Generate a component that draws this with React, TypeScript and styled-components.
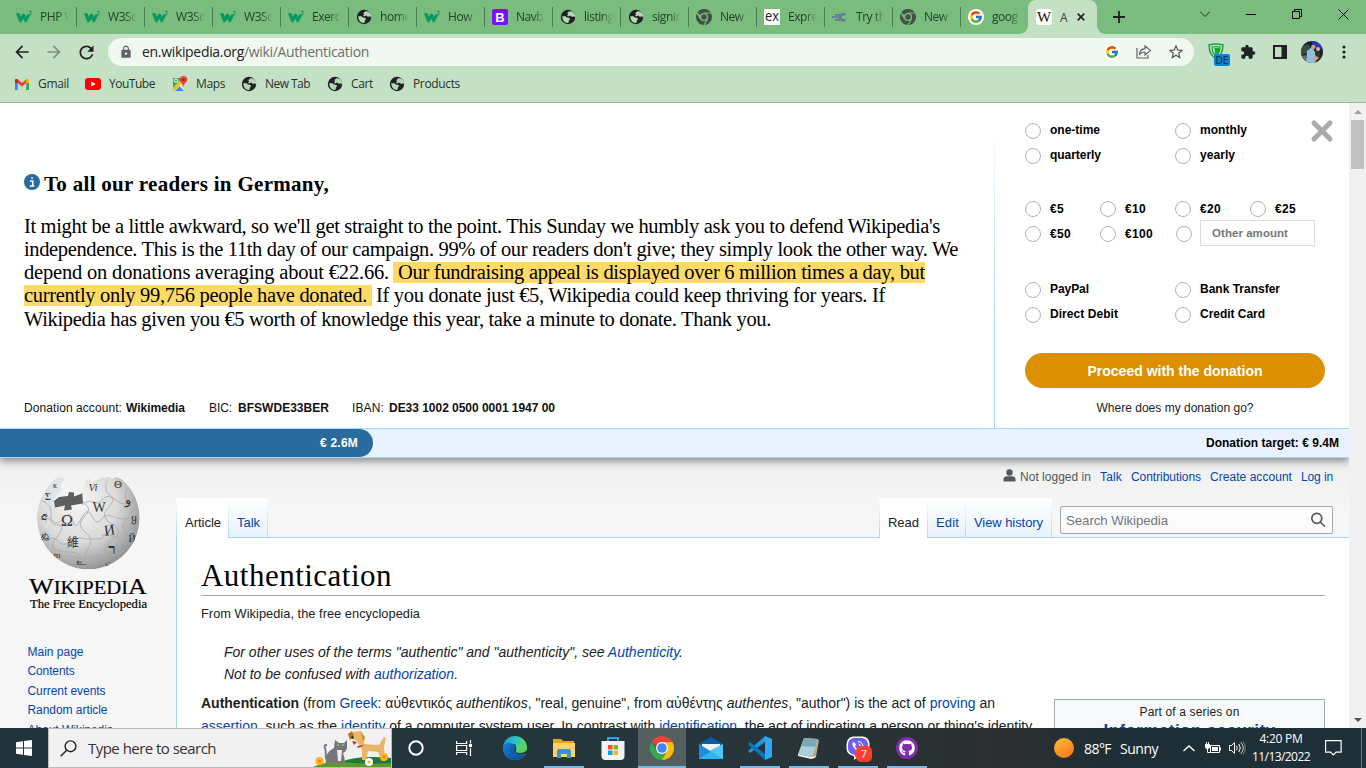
import React, { useLayoutEffect, useRef, useState } from 'react';
import styled, { createGlobalStyle } from 'styled-components';
import { FcGoogle } from 'react-icons/fc';
import { MdExtension, MdStarBorder, MdLock, MdArrowBack, MdArrowForward, MdRefresh } from 'react-icons/md';
import { FaGithub, FaViber } from 'react-icons/fa';

const ui = '"Open Sans", "Noto Sans", sans-serif';
const sans = '"Liberation Sans", Arial, sans-serif';
const serif = '"Liberation Serif", Georgia, serif';

const GlobalStyle = createGlobalStyle`
  * { box-sizing: border-box; }
  body { margin: 0; overflow: hidden; font-family: ${sans}; color: #202122; background: #fff; }
`;

/* Text whose tracking is adjusted so that it fills the given measure. */
const FitText = styled.span`
  display: inline-block;
  white-space: pre;
  flex: none;
`;
function Fit({ w, children }: { w: number; children: React.ReactNode }) {
  const ref = useRef<HTMLSpanElement>(null);
  const [tracking, setTracking] = useState(0);
  useLayoutEffect(() => {
    const el = ref.current;
    if (!el) return;
    const count = (el.textContent || '').length || 1;
    setTracking((w - el.getBoundingClientRect().width) / count);
  }, [w]);
  return <FitText ref={ref} style={{ letterSpacing: tracking }}>{children}</FitText>;
}

const Screen = styled.div`
  width: 1366px; height: 768px; display: flex; flex-direction: column; overflow: hidden;
`;

/* ---------- Browser frame ---------- */
const TabStrip = styled.div`
  height: 34px; flex: none; display: flex; background: #7abc7d; padding-left: 8px; font-family: ${ui}; font-size: 12px;
`;
const TabItem = styled.div`
  width: 68px; height: 34px; display: flex; align-items: center; gap: 8px; flex: none;
  border-left: 1px solid transparent; padding-left: 7px;
  background: linear-gradient(#4c7f50, #4c7f50) left 0 top 7px / 1px 20px no-repeat border-box;
  &:first-child { background: none; }
`;
const TabTitle = styled.span`
  width: 29px; overflow: hidden; white-space: nowrap; color: #24402a; line-height: 18px; font-size: 12px; letter-spacing: -.45px;
  mask-image: linear-gradient(90deg, #000 60%, transparent 100%);
`;
const ActiveTab = styled.div`
  position: relative; width: 69px; height: 34px; background: #c5e1c5; border-radius: 8px 8px 0 0; display: flex;
  align-items: center; padding-left: 8px; color: #3c4043; flex: none;
  &::before, &::after {
    content: ''; position: absolute; bottom: 0; width: 8px; height: 8px;
  }
  &::before { left: -8px; background: radial-gradient(circle at 0 0, transparent 7.5px, #c5e1c5 8px); }
  &::after { right: -8px; background: radial-gradient(circle at 100% 0, transparent 7.5px, #c5e1c5 8px); }
`;
const WikiFavicon = styled.span`
  width: 16px; height: 16px; border-radius: 3px; background: #fff; color: #111; font: 15px/16px ${serif};
  display: flex; justify-content: center; margin-right: 8px;
`;
const ActiveTitle = styled.span` width: 17px; `;
const WindowButtons = styled.div`
  display: flex; margin-left: auto; height: 28px; align-items: center;
`;
const WindowButton = styled.div<{ $w: number }>`
  width: ${p => p.$w}px; display: flex; justify-content: center;
`;
const NewTab = styled.div` width: 44px; height: 34px; display: grid; place-items: center; `;

const Toolbar = styled.div`
  height: 35px; flex: none; background: #c5e1c5; display: flex; align-items: center; padding: 1px 0 0 12px; color: #202124;
  font-family: ${ui};
`;
const NavIcon = styled.div<{ $dim?: boolean }>`
  width: 32px; height: 20px; opacity: ${p => (p.$dim ? 0.42 : 1)}; display: flex; align-items: center;
`;
const AddressBar = styled.div`
  width: 1086px; height: 28px; border-radius: 14px; background: #f1f8f1; display: flex; align-items: center;
  padding: 0 2px 0 11px; font-size: 14px; color: #202124; flex: none;
  > svg { flex: none; }
`;
const UrlText = styled.div` margin-left: 9px; flex: 1; line-height: 20px; `;
const Path = styled.span` color: #6a716b; `;
const AddressIcon = styled.div` width: 32px; display: flex; justify-content: center; `;
const GoogleBadge = styled.div`
  width: 16px; height: 16px; border-radius: 8px; background: #fff; display: grid; place-items: center; flex: none;
`;
const Extensions = styled.div` display: flex; align-items: center; flex: 1; padding-left: 14px; height: 28px; `;
const Blocker = styled.div` position: relative; width: 32px; height: 20px; `;
const CountryBadge = styled.span`
  position: absolute; left: 6px; top: 12px; width: 16px; height: 12px; border-radius: 2px; background: #0a84d0;
  color: #10243a; font-size: 10px; line-height: 12px; text-align: center;
`;
const ExtIcon = styled.div<{ $w: number }>` width: ${p => p.$w}px; display: flex; align-items: center; `;

const Bookmarks = styled.div`
  height: 34px; flex: none; background: #c5e1c5; border-bottom: 1px solid #9fb8a0; display: flex; padding: 0 0 4px 14px;
  align-items: center; font: 12px ${ui}; color: #24332a;
`;
const Bookmark = styled.div<{ $w: number }>`
  width: ${p => p.$w}px; display: flex; align-items: center; gap: 8px; flex: none;
  > svg { flex: none; }
`;

/* ---------- Page viewport ---------- */
const Viewport = styled.div` height: 625px; flex: none; display: flex; `;
const Page = styled.div` width: 1349px; height: 625px; overflow: hidden; background: #f6f6f6; flex: none; `;
const ScrollTrack = styled.div`
  width: 17px; background: #f1f1f1; display: flex; flex-direction: column; align-items: center; padding: 7px 0 6px;
`;
const ScrollThumb = styled.div` width: 13px; height: 49px; margin-top: 6px; background: #c1c1c1; `;
const ArrowUp = styled.div` border: 4px solid transparent; border-top: 0; border-bottom: 4px solid #a0a0a0; `;
const ArrowDown = styled.div` margin-top: auto; border: 4px solid transparent; border-bottom: 0; border-top: 4px solid #505050; `;

const Banner = styled.section`
  position: relative; z-index: 1; height: 355px; background: #fff; box-shadow: 0 3px 8px rgba(0, 0, 0, .45);
`;
const BannerMain = styled.div` display: flex; height: 325px; `;
const Message = styled.div` width: 994px; padding: 69px 0 0 24px; color: #000; `;
const Greeting = styled.div`
  display: flex; gap: 4px; font: bold 21px/24px ${serif}; height: 24px; align-items: center;
  > svg { margin-top: -4px; flex: none; }
`;
const Appeal = styled.div` margin-top: 17.600px; font: 20.5px/23.25px ${serif}; height: 117.400px; `;
const AppealLine = styled.div` display: flex; height: 23.25px; align-items: center; padding-top: 2px; `;
const Highlight = styled.span<{ $gap?: number; $after?: number }>`
  background: #ffdb66; height: 21px; line-height: 21px; margin-top: -1px; padding-left: ${p => (p.$gap ? 5 : 0)}px; margin-left: ${p => p.$gap || 0}px;
  padding-right: ${p => (p.$after ? 5 : 0)}px; margin-right: ${p => p.$after || 0}px;
`;
const BankLine = styled.div`
  display: flex; margin-top: 68px; font-size: 12px; line-height: 18px; color: #111;
`;
const BankItem = styled.div<{ $w: number; $label: number }>`
  width: ${p => p.$w}px; display: grid; grid-template-columns: ${p => p.$label}px auto; flex: none; justify-content: start;
  justify-items: start;
`;
const VerticalRule = styled.div` width: 1px; background: linear-gradient(#fff 5%, #a7d7f9 70%); `;
const DonationForm = styled.div` flex: 1; padding: 15px 0 0 30px; color: #000; position: relative; font-size: 12px; `;
const OptionGrid = styled.div<{ $cols: number; $mt?: number; $lift?: number }>`
  display: grid; grid-template-columns: repeat(${p => p.$cols}, ${p => 300 / p.$cols}px); grid-auto-rows: 25px;
  margin-top: ${p => p.$mt || 0}px;
  b { margin-top: ${p => -(p.$lift || 0)}px; }
`;
const Option = styled.label`
  display: flex; gap: 9px; padding-top: 5px; line-height: 16px; height: 25px;
`;
const Radio = styled.span<{ $shift?: boolean }>`
  width: 16px; height: 16px; border: 1px solid #b2b2b2; border-radius: 50%; flex: none; margin-left: ${p => (p.$shift ? 1 : 0)}px;
`;
const OtherAmount = styled.span`
  width: 115px; height: 26px; margin-top: -6px; margin-left: -1px; border: 1px solid #ddd; color: #777; font-weight: bold; font-size: 11.5px;
  line-height: 25px; padding-left: 11px; flex: none;
`;
const Proceed = styled.button`
  display: flex; align-items: center; justify-content: center; margin: 26px 0 0; width: 300px; height: 35px; border: 0; padding: 0;
  border-radius: 18px; background: #db9000; color: #fff; font: bold 14px ${sans};
`;
const WhereLink = styled.div` width: 300px; text-align: center; margin-top: 12px; line-height: 16px; color: #222; `;
const CloseIcon = styled.svg` position: absolute; left: 315px; top: 16px; `;
const Progress = styled.div`
  height: 30px; border: solid #a7d7f9; border-width: 1px 0; background: #eaf1ff; display: flex; justify-content: space-between;
  align-items: center; font-size: 12px; font-weight: bold; padding-right: 10px; color: #000;
`;
const ProgressFill = styled.div`
  width: 373px; height: 28px; border-radius: 0 14px 14px 0; background: #2a6b9f; color: #fff; display: flex; align-items: center;
  justify-content: flex-end; padding-right: 15px;
`;

/* ---------- Article ---------- */
const Wiki = styled.div`
  display: grid; grid-template-columns: 176px 1fr; height: 270px; background: linear-gradient(#f0f0f0, #f6f6f6 55px);
`;
const Sidebar = styled.aside` padding: 17px 0 0 27px; > svg { display: block; } `;
const SideNav = styled.nav`
  margin-top: 31px; font-size: 12px; line-height: 19.4px; color: #0645ad; padding-left: .5px;
  > div { height: 19.4px; }
`;
const MainColumn = styled.main` min-width: 0; `;
const Personal = styled.div`
  height: 40px; display: flex; justify-content: flex-end; gap: 9px; padding: 10px 16px 0 0; font-size: 12px; line-height: 18px; color: #0645ad;
`;
const Anonymous = styled.span` color: #54595d; display: flex; gap: 4px; > svg { margin-top: 1px; } `;
const TabsRow = styled.div`
  height: 40px; display: flex; background: linear-gradient(#a7d7f9, #a7d7f9) bottom / 100% 1px no-repeat;
`;
const WikiTab = styled.div<{ $w: number; $on?: boolean }>`
  width: ${p => p.$w}px; height: 40px; padding: 15px 0 0 8px; font-size: 13px; line-height: 20px; flex: none;
  color: ${p => (p.$on ? '#202122' : '#0645ad')};
  background: ${p => (p.$on
    ? 'linear-gradient(#fff, #fff) 0 0 / calc(100% - 1px) 100% no-repeat'
    : 'linear-gradient(#fff, #e8f2fa) 0 0 / calc(100% - 1px) 39px no-repeat')},
    linear-gradient(#fff, #a7d7f9) right / 1px 100% no-repeat;
`;
const TabEdge = styled.div` width: 1px; background: linear-gradient(#fff, #a7d7f9); `;
const Spacer = styled.div` flex: 1; `;
const SearchBox = styled.div`
  width: 273px; height: 28px; margin: 8px 16px 0 8px; border: 1px solid #a2a9b1; border-radius: 2px; background: rgba(255,255,255,.5);
  display: flex; align-items: center; justify-content: space-between; padding: 0 6px 0 5px; color: #72777d; font-size: 13.3px;
`;
const Article = styled.article`
  height: 190px; background: #fff; border-left: 1px solid #a7d7f9; padding: 17px 24px 0;
`;
const Title = styled.h1`
  margin: 0; font: 31px/42px ${serif}; color: #000; height: 41px; border-bottom: 1px solid #a2a9b1;
`;
const SiteSub = styled.div` font-size: 12.8px; line-height: 18px; margin-top: 9px; `;
const Hatnotes = styled.div`
  font-style: italic; font-size: 14px; line-height: 22px; margin: 18px 0 0 23px; > div { height: 22px; }
`;
const A = styled.span` color: #0645ad; `;
const BodyRow = styled.div` display: flex; justify-content: space-between; font-size: 14px; line-height: 22px; margin-top: 7px; `;
const Prose = styled.div` width: 836px; > div { height: 22px; } > div + div { padding-top: 1px; } `;
const SeriesBox = styled.div`
  width: 271px; height: 90px; margin-top: 7px; border: 1px solid #a2a9b1; background: #f8f9fa; text-align: center; font-size: 12px;
  line-height: 16px; padding-top: 4px;
`;
const SeriesTitle = styled.div` font-size: 17px; font-weight: bold; color: #0645ad; line-height: 22px; `;

/* ---------- Taskbar ---------- */
const Taskbar = styled.footer`
  height: 40px; flex: none; display: flex; background: linear-gradient(90deg, #22333b, #26363d 50%, #2b2f2f 74%, #1d2e36 82%, #1f303a);
  color: #fff; font-family: ${ui};
`;
const Slot = styled.div<{ $active?: boolean; $open?: boolean; $gap?: number }>`
  width: 48px; height: 40px; display: grid; place-items: center; flex: none; position: relative; margin-right: ${p => p.$gap || 0}px;
  background: ${p => (p.$open ? `linear-gradient(#76b9ed, #76b9ed) bottom / ${p.$active ? 48 : 40}px 2px no-repeat` : 'none')};
  background-color: ${p => (p.$active ? '#54605f' : 'transparent')};
`;
const SearchField = styled.div`
  width: 344px; height: 40px; background: #f1f1f1; border: 1px solid #bdbdbd; display: flex; align-items: center; color: #333;
  font-size: 15px; padding-left: 11px; overflow: hidden; flex: none;
  > span { margin-left: 11px; }
  > svg:last-child { margin-left: auto; }
`;
const Count = styled.span`
  position: absolute; left: 22px; top: 18px; width: 16px; height: 16px; border-radius: 5px; background: #ff3d2e; font-size: 11px;
  line-height: 16px; text-align: center;
`;
const Tray = styled.div` margin-left: auto; display: flex; align-items: center; height: 40px; width: 312px; font-size: 14px; `;
const Sun = styled.div` width: 20px; height: 20px; border-radius: 50%; background: linear-gradient(150deg, #ffbc34, #f4731c); margin-right: 10px; `;
const Weather = styled.div` display: flex; gap: 9px; width: 99px; `;
const TrayIcon = styled.div<{ $w: number }>` width: ${p => p.$w}px; display: flex; flex: none; `;
const Clock = styled.div`
  width: 64px; display: flex; flex-direction: column; align-items: center; font-size: 12px; line-height: 18px; margin: 0 12px 0 -3px;
`;
const ShowDesktop = styled.div` width: 1px; height: 40px; margin-left: auto; margin-right: 4px; background: #6d787c; `;

/* ---------- Icons ---------- */
const W3Icon = () => (
  <svg width="16" height="16" viewBox="0 0 16 16">
    <path d="M.5 4.600h2.800l1.500 4.200L6.800 5h1.600l1.300 3.400 2-3 2 .6-3.300 7H9.200L7.400 9.300 5 13H3.700z" fill="#059862" stroke="#059862" strokeWidth=".7" />
    <path d="M13 2.300h2.300l-1.200 1.300c1.700 0 1.600 2.200-.1 2.200-.6 0-1-.2-1.200-.6" fill="none" stroke="#059862" strokeWidth=".9" />
  </svg>
);
const EarthIcon = () => (
  <svg width="16" height="16" viewBox="0 0 16 16">
    <circle cx="8" cy="8" r="7.200" fill="#202124" />
    <g fill="#b4d8b6">
      <path d="M9.200 2.200 7.300 4.200l.9 1.200-1.200 1.200 1.300.8 1.700-.8 1.900 1.100 1.800-.2 1.700.6c0-2.500-1.500-4.700-3.600-5.600z" />
      <path d="M2.200 7.200h3.300l1.500 1.400 2.200.3 1 1.100-1.300 1.500-.5 2.400c-3.200.4-6-2.200-6.200-6.700z" />
    </g>
  </svg>
);
const ChromeMark = ({ size = 16, color = false }: { size?: number; color?: boolean }) => {
  const c = color ? ['#ea4335', '#fbbc04', '#34a853', '#fff', '#4285f4'] : ['#45504a', '#45504a', '#45504a', '#7abc7d', '#45504a'];
  return (
    <svg width={size} height={size} viewBox="0 0 24 24">
      <path d="M12 12 1.600 6a12 12 0 0 1 20.800 0z" fill={c[0]} />
      <path d="M12 12h0V6h10.400A12 12 0 0 1 12 24z" fill={c[1]} />
      <path d="M1.600 6A12 12 0 0 0 12 24l5.200-9L12 12 6.800 15z" fill={c[2]} />
      {!color && <path d="M12 6h10.600M6.800 15 1.500 5.800M17.200 15 12 24.200" stroke={c[3]} strokeWidth="1.600" />}
      <circle cx="12" cy="12" r="6" fill={c[3]} />
      <circle cx="12" cy="12" r={color ? 4.8 : 4} fill={c[4]} />
    </svg>
  );
};
const BootstrapIcon = () => (
  <svg width="16" height="16"><rect width="16" height="16" rx="2" fill="#7a12f5" /><text x="8" y="12.500" fontSize="13" fontWeight="bold" fontFamily="Liberation Sans" fill="#fff" textAnchor="middle">B</text></svg>
);
const ExpressIcon = () => (
  <svg width="16" height="16"><rect width="16" height="16" fill="#fff" /><text x="8" y="12" fontSize="14" fontFamily="Open Sans" fontWeight="400" fill="#222" textAnchor="middle" textLength="14" lengthAdjust="spacingAndGlyphs">ex</text></svg>
);
const TryIcon = () => (
  <svg width="16" height="16" viewBox="0 0 16 16" fill="none" stroke="#64799b">
    <path d="M13.200 6A3 3 0 1 0 13.200 10.400" strokeWidth="2.400" /><path d="M3 5.800h5M0 8.200h7M3 10.800h5" strokeWidth="1.800" />
  </svg>
);
const GmailIcon = () => (
  <svg width="16" height="16" viewBox="0 0 16 16" fill="none" strokeWidth="2.800">
    <path d="M2.400 14V4" stroke="#4285f4" /><path d="M13.600 14V4" stroke="#34a853" />
    <path d="M2 3.900 8 8.600l6-4.700" stroke="#ea4335" /><path d="M13.600 7V3.200" stroke="#fbbc04" /><path d="M2.400 7V3.200" stroke="#c5221f" />
  </svg>
);
const YouTubeIcon = () => (
  <svg width="16" height="12" viewBox="0 0 16 12"><rect width="16" height="12" rx="3" fill="#f00" /><path d="m6.300 3.400 4.400 2.600-4.400 2.600z" fill="#fff" /></svg>
);
const MapsIcon = () => (
  <svg width="16" height="16" viewBox="0 0 16 16">
    <path d="M1 2h9l-9 10z" fill="#34a853" /><path d="m1 13 6-6 6 8H2z" fill="#dfe7ee" /><path d="m3 15 4.500-4.800L12 15z" fill="#4285f4" />
    <path d="M1 12 8 5l1.800 2L2 15H1z" fill="#fbbc04" /><circle cx="4" cy="4.600" r="1.700" fill="none" stroke="#fff" />
    <path d="M11.500 0a3.700 3.700 0 0 0-3.700 3.700c0 2.600 3 3.200 3.700 7.300.7-4.100 3.700-4.700 3.700-7.300A3.700 3.700 0 0 0 11.500 0z" fill="#ea4335" /><circle cx="11.500" cy="3.800" r="1.300" fill="#811f18" />
  </svg>
);
const ProfileIcon = () => (
  <svg width="22" height="22" viewBox="0 0 22 22">
    <defs><clipPath id="avatar"><circle cx="11" cy="11" r="11" /></clipPath></defs>
    <g clipPath="url(#avatar)">
      <rect width="22" height="22" fill="#182028" /><path d="M10 0h12v10l-5-4-4 2z" fill="#2338b8" /><path d="M0 6 7 3l3 4-5 5-5 3z" fill="#3b4d45" />
      <path d="M6 10 11 6l3 5 1 11H5z" fill="#8fbfe0" /><circle cx="12.300" cy="6" r="2.200" fill="#caa088" /><path d="m14 10 4-2 2 9-5 5z" fill="#3f2b26" />
      <path d="m14 14 4 3-5 4z" fill="#d19a7c" /><circle cx="17" cy="8" r="2" fill="#ddb49b" /><path d="m1 15 4-1v7z" fill="#8a6c55" />
    </g>
  </svg>
);

const WikipediaLogo = () => (
  <svg width="122" height="137" viewBox="27 475 122 137">
    <defs>
      <radialGradient id="ball" cx=".4" cy=".35" r=".7"><stop offset="0" stopColor="#f7f7f7" /><stop offset=".55" stopColor="#dadada" /><stop offset="1" stopColor="#8d8d8d" /></radialGradient>
      <clipPath id="globe"><path d="M55 479 63 477l1 3-3 5 1 5-4 4-4 6 5 3 23-6 1-10 2-3v-4l5-1 1 4 9-5 9-1 3 2 4-2 5.600 2A51.300 51.300 0 1 1 55 479z" /></clipPath>
    </defs>
    <g clipPath="url(#globe)">
      <circle cx="88.300" cy="518" r="51.300" fill="url(#ball)" />
      <g fill="none" stroke="#aaa" strokeWidth=".8">
        <path d="M41 500q12 5 10 15t7 10-2 13 12 14 8 18" /><path d="M83 493q-3 8 3 12t-2 12 1 15 4 15-4 21" /><path d="M107 481q-4 10 3 14t-2 13 4 16 1 15-7 20" />
        <path d="M39 520q10-4 14 1t11-3 9 3 8-2 11-3 9 4 10-4 11 3 18-5" /><path d="M42 541q12-6 16 0t13 1 10-4 13 1 9-3 14 1 20-8" />
        <path d="M57 558q12-4 18-1t14 0 15-1 20-5" /><path d="M82 505q7-6 12-3t9-3 14 2 20-5M127 488q-4 12 3 17t-3 13 4 22" />
      </g>
      <g fill="#333" fontFamily="Liberation Serif" textAnchor="middle">
        <text x="67" y="526" fontSize="16">Ω</text><text x="99" y="512" fontSize="14">W</text><text x="110" y="535" fontSize="15" transform="rotate(-8 110 535)">И</text>
        <text x="73" y="547" fontSize="12" fontFamily="Noto Sans CJK TC">維</text><text x="48" y="500" fontSize="10">Σ</text><text x="55" y="488" fontSize="8">к</text><text x="93" y="491" fontSize="11" fontStyle="italic">Vi</text>
        <text x="118" y="488" fontSize="11">Θ</text><text x="128" y="504" fontSize="13">و</text><text x="44" y="520" fontSize="11">අ</text><text x="45" y="540" fontSize="9" fontFamily="Noto Sans CJK JP">ぬ</text>
        <text x="112" y="554" fontSize="15" fontWeight="bold">ר</text><text x="81" y="565" fontSize="11">உ</text><text x="134" y="522" fontSize="11">ყ</text><text x="132" y="542" fontSize="10">Й</text><text x="57" y="558" fontSize="9">m</text><text x="109" y="566" fontSize="9">ت</text>
      </g>
    </g>
    <path d="m54 501 5-4 9-1 1-4 5 .5 0 4 8-3 1 10-12 2 1 4-8 1 1-5-10 2z" fill="#5e5e5e" />
    <g fontFamily="Liberation Serif" fill="#000" stroke="#000" strokeWidth=".2">
      <text x="29" y="593.500" fontSize="23.500" textLength="118" lengthAdjust="spacingAndGlyphs">W<tspan fontSize="18.500">IKIPEDI</tspan>A</text>
      <text x="30" y="608" fontSize="12.500" textLength="117" lengthAdjust="spacingAndGlyphs">The Free Encyclopedia</text>
    </g>
  </svg>
);

const PetsArt = () => (
  <svg width="80" height="38" viewBox="312 729 80 38">
    <path d="M312 768q14-8 40-6 24-6 40-4v10z" fill="#5d9a2d" /><path d="M342 762q16-7 50-4v5q-22 2-50-1z" fill="#23793a" />
    <path d="M327 763q-2-10 8-15l1-8 4 3h5l3-3v8q-1 4-4 5 2 5 2 10z" fill="#77737f" /><path d="M329 760c-4 0-1-8-3-12-1-2-1-3 2-3" fill="none" stroke="#77737f" strokeWidth="1.800" />
    <path d="M338 750h5l-1 11h-3z" fill="#eee" /><circle cx="339" cy="745" r="1" fill="#8ecb4b" /><circle cx="344" cy="745" r="1" fill="#8ecb4b" />
    <path d="m350 737 4-5 8-1 4 6-1 7 15 1 5-8 2 1-2 9 1 14h-3l-4-9-10-1-2 9h-4v-10l-5-9z" fill="#e9b568" /><path d="m349 734 4-3 2 5-4 4z" fill="#b2722c" /><path d="m362 732 4 6-2 3z" fill="#c98a3d" />
    <path d="m353 741 5 1-3 3z" fill="#c92f2a" /><circle cx="353.500" cy="737.500" r="1.200" fill="#222" /><path d="m358 746 7-1-1 1-5 2z" fill="#b63c2c" />
    <g fill="#ffb31c"><circle cx="320.500" cy="761" r="4" /><circle cx="385" cy="757" r="4" /></g><circle cx="370" cy="762" r="4" fill="#fff" />
    <g fill="#f37b12"><circle cx="320.500" cy="761" r="1.500" /><circle cx="385" cy="757" r="1.500" /></g><circle cx="370" cy="762" r="1.500" fill="#f6bd22" />
  </svg>
);
const EdgeIcon = () => (
  <svg width="24" height="24" viewBox="0 0 24 24">
    <defs>
      <linearGradient id="edgeTop" x1="0" x2="1" y1=".5" y2=".5"><stop stopColor="#1b9de2" /><stop offset=".55" stopColor="#2bc3c4" /><stop offset="1" stopColor="#67d94a" /></linearGradient>
      <linearGradient id="edgeLow" x2="1" y2="1"><stop stopColor="#1680d6" /><stop offset="1" stopColor="#0c4a91" /></linearGradient>
    </defs>
    <circle cx="12" cy="12" r="12" fill="url(#edgeTop)" />
    <path d="M0 12C0 7 5 6 9 7.500c3 1 5 3.500 5 5.500l-3 1c-1 5 5 7 11.200 4.500C20 22 16 24 12 24 5 24 0 18 0 12z" fill="url(#edgeLow)" />
    <path d="M7 14c0-4 2-6 5-6 2 2 2.500 4 1.500 5.500-1.700 2.400 1.500 3.500 3.800 3.500 2 0 4-.5 5.500-2-.4 2-1 3-1.500 4C15 22 7 20 7 14z" fill="#1160ac" />
    <path d="M12.500 10.500c2 1.500 1.500 3 .8 4-.5 1.700 2 2.600 4 2.600 3 0 5.500-1.500 6.400-3.500l-.2 4-8 .8-4.500-4z" fill="#24343b" />
    <path d="M13.300 13.600c-1.500 2.800 2 3.500 4.200 3.400 3-.2 6.500-2 6.500-6L19 8l-6 1z" fill="#57d06a" />
  </svg>
);
const ExplorerIcon = () => (
  <svg width="24" height="22" viewBox="0 0 24 22"><path d="M1 2h8l2 2h11v4H1z" fill="#e4a41e" /><path d="M1 6h22v14H1z" fill="#ffd36a" /><path d="M5 21v-7q0-2 2-2h10q2 0 2 2v7h-4v-4H9v4z" fill="#3b91d4" /></svg>
);
const StoreIcon = () => (
  <svg width="24" height="24" viewBox="0 0 24 24"><path d="M7 7V2h10v5" fill="none" stroke="#24a9e5" strokeWidth="2" /><path d="M.5 5h23v15q0 4-4 4h-15q-4 0-4-4z" fill="#f3f3f3" /><path d="M7 9h4.500v4.500H7z" fill="#f25022" /><path d="M12.500 9H17v4.500h-4.500z" fill="#7fba00" /><path d="M7 14.500h4.500V19H7z" fill="#00a4ef" /><path d="M12.500 14.500H17V19h-4.500z" fill="#ffb900" /></svg>
);
const MailIcon = () => (
  <svg width="24" height="22" viewBox="0 0 24 22"><path d="m0 7 12-7 12 7v4H0z" fill="#0d5aa7" /><path d="M3 7h18v8H3z" fill="#f2f2f2" /><path d="M0 7 24 22H0z" fill="#1b8de0" /><path d="M24 7v15L0 22z" fill="#33b4f0" /><path d="M24 7v15L11 13.500z" fill="#50c8f6" /></svg>
);
const CodeIcon = () => (
  <svg width="24" height="24" viewBox="0 0 24 24"><path d="m17 6-15 11-2-2L17 0z" fill="#2197e0" /><path d="M17 18 2 6 0 8.500 17 24z" fill="#0d72b8" /><path d="M17 0 24 3v18l-7 3z" fill="#2fa8f2" /></svg>
);
const NotepadIcon = () => (
  <svg width="24" height="24" viewBox="0 0 24 24"><path d="M7 3 22 4l-3 17-4 1z" fill="#b6ab8d" /><path d="m7 2 14 1-6 18L1 18z" fill="#a8d1d8" /><path d="m7 2 14 1-3 8-14-1z" fill="#7ba9b2" /><path d="m1 18 14 3 4-1-1 2-4 1-13-3z" fill="#eee" /></svg>
);

const tabs: [React.ReactNode, string][] = [
  [<W3Icon />, 'PHP V'], [<W3Icon />, 'W3Sc'], [<W3Icon />, 'W3Sc'], [<W3Icon />, 'W3Sc'], [<W3Icon />, 'Exerc'],
  [<EarthIcon />, 'home'], [<W3Icon />, 'How T'], [<BootstrapIcon />, 'Navb'], [<EarthIcon />, 'listing'], [<EarthIcon />, 'signin'],
  [<ChromeMark />, 'New T'], [<ExpressIcon />, 'Expre'], [<TryIcon />, 'Try th'], [<ChromeMark />, 'New T'], [<GoogleBadge><FcGoogle size={14} /></GoogleBadge>, 'goog'],
];
const bookmarks: [React.ReactNode, string, number, number][] = [
  [<GmailIcon />, 'Gmail', 71, 31], [<YouTubeIcon />, 'YouTube', 87, 46], [<MapsIcon />, 'Maps', 69, 29],
  [<EarthIcon />, 'New Tab', 86, 45], [<EarthIcon />, 'Cart', 62, 22], [<EarthIcon />, 'Products', 90, 47],
];

function BrowserFrame() {
  return (
    <>
      <TabStrip>
        {tabs.map(([icon, title], i) => (
          <TabItem key={i}>{icon}<TabTitle>{title}</TabTitle></TabItem>
        ))}
        <ActiveTab>
          <WikiFavicon>W</WikiFavicon><ActiveTitle>A</ActiveTitle>
          <svg width="8" height="8" viewBox="0 0 8 8"><path d="m.7.7 6.600 6.600m0-6.600L.7 7.300" stroke="#202124" strokeWidth="1.700" /></svg>
        </ActiveTab>
        <NewTab><svg width="12" height="12"><path d="M6 0v12M0 6h12" stroke="#202124" strokeWidth="1.800" /></svg></NewTab>
        <WindowButtons>
          <WindowButton $w={46}><svg width="10" height="6"><path d="m0 .5 5 5 5-5" fill="none" stroke="#1b2a1c" /></svg></WindowButton>
          <WindowButton $w={46}><svg width="10" height="1"><path d="M0 .5h10" stroke="#000" /></svg></WindowButton>
          <WindowButton $w={46}><svg width="10" height="10"><path d="M.5 2.500h7v7h-7zM2.500 2.500v-2h7v7h-2" fill="none" stroke="#000" /></svg></WindowButton>
          <WindowButton $w={46}><svg width="11" height="11"><path d="m.5.5 10 10m0-10-10 10" stroke="#000" /></svg></WindowButton>
        </WindowButtons>
      </TabStrip>
      <Toolbar>
        <NavIcon><MdArrowBack size={20} /></NavIcon><NavIcon $dim><MdArrowForward size={20} /></NavIcon><NavIcon><MdRefresh size={21} /></NavIcon>
        <AddressBar>
          <MdLock size={14} color="#5f6368" />
          <UrlText><Fit w={227}>en.wikipedia.org<Path>/wiki/Authentication</Path></Fit></UrlText>
          <AddressIcon><GoogleBadge><FcGoogle size={14} /></GoogleBadge></AddressIcon>
          <AddressIcon>
            <svg width="16" height="16" viewBox="0 0 16 16" fill="none" stroke="#5f6368" strokeWidth="1.200"><path d="M1 4v10h11v-3M9 2l5.500 4.500L9 11V8C6 8 4.500 9 3.500 11c0-3.500 2-6 5.500-6.300z" /></svg>
          </AddressIcon>
          <AddressIcon><MdStarBorder size={18} color="#4f5553" /></AddressIcon>
        </AddressBar>
        <Extensions>
          <Blocker>
            <svg width="16" height="18" viewBox="0 0 16 18" fill="none" stroke="#13a538" strokeWidth="1.400"><path d="M1 3q7-2 14 0c0 7-2 11-7 13C3 14 1 10 1 3z" /><path d="M4 5q4-1 8 0c0 4-1 7-4 8-3-1-4-4-4-8z" strokeWidth="1.200" /><path d="M7 6.500h4c0 3-1 4-3 5z" fill="#13a538" /></svg>
            <CountryBadge>DE</CountryBadge>
          </Blocker>
          <ExtIcon $w={33}><MdExtension size={16} /></ExtIcon>
          <ExtIcon $w={28}><svg width="14" height="14"><path d="M1 1h12v12H1z" fill="none" stroke="#202124" strokeWidth="2" /><path d="M8.500 1H13v12H8.500z" fill="#202124" /></svg></ExtIcon>
          <ExtIcon $w={41}><ProfileIcon /></ExtIcon>
          <svg width="4" height="14"><g fill="#202124"><circle cx="2" cy="2" r="1.600" /><circle cx="2" cy="7" r="1.600" /><circle cx="2" cy="12" r="1.600" /></g></svg>
        </Extensions>
      </Toolbar>
      <Bookmarks>
        {bookmarks.map(([icon, label, w, tw]) => <Bookmark key={label} $w={w}>{icon}<Fit w={tw}>{label}</Fit></Bookmark>)}
      </Bookmarks>
    </>
  );
}

function DonationBanner() {
  return (
    <Banner>
      <BannerMain>
        <Message>
          <Greeting>
            <svg width="16" height="16"><circle cx="8" cy="8" r="8" fill="#2a6b9f" /><path d="M6 7h2.800v4.500M5.800 12h4.500M7.200 4h1.700" stroke="#fff" strokeWidth="1.500" fill="none" /></svg>
            <Fit w={285}>To all our readers in Germany,</Fit>
          </Greeting>
          <Appeal>
            <AppealLine><Fit w={916}>It might be a little awkward, so we'll get straight to the point. This Sunday we humbly ask you to defend Wikipedia's</Fit></AppealLine>
            <AppealLine><Fit w={934}>independence. This is the 11th day of our campaign. 99% of our readers don't give; they simply look the other way. We</Fit></AppealLine>
            <AppealLine><Fit w={365}>depend on donations averaging about €22.66.</Fit><Highlight $gap={4}><Fit w={527}>Our fundraising appeal is displayed over 6 million times a day, but</Fit></Highlight></AppealLine>
            <AppealLine><Highlight $after={4}><Fit w={343}>currently only 99,756 people have donated.</Fit></Highlight><Fit w={509}>If you donate just €5, Wikipedia could keep thriving for years. If</Fit></AppealLine>
            <AppealLine><Fit w={747}>Wikipedia has given you €5 worth of knowledge this year, take a minute to donate. Thank you.</Fit></AppealLine>
          </Appeal>
          <BankLine>
            <BankItem $w={185} $label={102}><Fit w={98}>Donation account:</Fit><b><Fit w={59}>Wikimedia</Fit></b></BankItem>
            <BankItem $w={143} $label={29}><Fit w={23}>BIC:</Fit><b><Fit w={91}>BFSWDE33BER</Fit></b></BankItem>
            <BankItem $w={210} $label={37}><Fit w={32}>IBAN:</Fit><b><Fit w={166}>DE33 1002 0500 0001 1947 00</Fit></b></BankItem>
          </BankLine>
        </Message>
        <VerticalRule />
        <DonationForm>
          <OptionGrid $cols={2} $lift={1}>
            {([['one-time', 50], ['monthly', 47], ['quarterly', 51], ['yearly', 35]] as [string, number][]).map(([t, w]) => <Option key={t}><Radio /><b><Fit w={w}>{t}</Fit></b></Option>)}
          </OptionGrid>
          <OptionGrid $cols={4} $mt={28}>
            {([['€5', 14], ['€10', 21], ['€20', 21], ['€25', 21], ['€50', 21], ['€100', 28]] as [string, number][]).map(([t, w]) => <Option key={t}><Radio /><b><Fit w={w}>{t}</Fit></b></Option>)}
            <Option><Radio $shift /><OtherAmount><Fit w={76}>Other amount</Fit></OtherAmount></Option>
          </OptionGrid>
          <OptionGrid $cols={2} $mt={31} $lift={1}>
            {([['PayPal', 39], ['Bank Transfer', 80], ['Direct Debit', 68], ['Credit Card', 65]] as [string, number][]).map(([t, w]) => <Option key={t}><Radio /><b><Fit w={w}>{t}</Fit></b></Option>)}
          </OptionGrid>
          <Proceed><Fit w={175}>Proceed with the donation</Fit></Proceed>
          <WhereLink><Fit w={157}>Where does my donation go?</Fit></WhereLink>
          <CloseIcon width="24" height="24"><path d="m4 4 16 16M20 4 4 20" stroke="#aaa" strokeWidth="5" strokeLinecap="round" /></CloseIcon>
        </DonationForm>
      </BannerMain>
      <Progress>
        <ProgressFill><Fit w={38}>€ 2.6M</Fit></ProgressFill>
        <Fit w={133}>Donation target: € 9.4M</Fit>
      </Progress>
    </Banner>
  );
}

function WikiPage() {
  return (
    <Wiki>
      <Sidebar>
        <WikipediaLogo />
        <SideNav>
          {([['Main page', 56], ['Contents', 47], ['Current events', 78], ['Random article', 80], ['About Wikipedia', 86]] as [string, number][]).map(([t, w]) => <div key={t}><Fit w={w}>{t}</Fit></div>)}
        </SideNav>
      </Sidebar>
      <MainColumn>
        <Personal>
          <Anonymous><svg width="13" height="13" viewBox="0 0 13 13" fill="#54595d"><circle cx="6.500" cy="3.500" r="3.200" /><path d="M.5 12.500V10Q1 7.300 4 7.300h5q3 0 3.500 2.700v2.500z" /></svg><Fit w={71}>Not logged in</Fit></Anonymous>
          <Fit w={22}>Talk</Fit><Fit w={70}>Contributions</Fit><Fit w={82}>Create account</Fit><Fit w={32}>Log in</Fit>
        </Personal>
        <TabsRow>
          <TabEdge />
          <WikiTab $w={52} $on><Fit w={36}>Article</Fit></WikiTab><WikiTab $w={39}><Fit w={23}>Talk</Fit></WikiTab>
          <Spacer />
          <TabEdge />
          <WikiTab $w={48} $on><Fit w={31}>Read</Fit></WikiTab><WikiTab $w={38}><Fit w={23}>Edit</Fit></WikiTab><WikiTab $w={86}><Fit w={69}>View history</Fit></WikiTab>
          <SearchBox>
            <Fit w={102}>Search Wikipedia</Fit>
            <svg width="16" height="16" fill="none" stroke="#54595d" strokeWidth="1.700"><circle cx="6.800" cy="6.300" r="5" /><path d="m10.300 10 4.500 4.500" /></svg>
          </SearchBox>
        </TabsRow>
        <Article>
          <Title><Fit w={191}>Authentication</Fit></Title>
          <SiteSub><Fit w={219}>From Wikipedia, the free encyclopedia</Fit></SiteSub>
          <Hatnotes>
            <div><Fit w={459}>For other uses of the terms "authentic" and "authenticity", see <A>Authenticity</A>.</Fit></div>
            <div><Fit w={234}>Not to be confused with <A>authorization</A>.</Fit></div>
          </Hatnotes>
          <BodyRow>
            <Prose>
              <div><Fit w={794}><b>Authentication</b> (from <A>Greek</A>: αὐθεντικός <i>authentikos</i>, "real, genuine", from αὐθέντης <i>authentes</i>, "author") is the act of <A>proving</A> an</Fit></div>
              <div><Fit w={834}><A>assertion</A>, such as the <A>identity</A> of a computer system user. In contrast with <A>identification</A>, the act of indicating a person or thing's identity,</Fit></div>
            </Prose>
            <SeriesBox><Fit w={100}>Part of a series on</Fit><SeriesTitle><Fit w={172}>Information security</Fit></SeriesTitle></SeriesBox>
          </BodyRow>
        </Article>
      </MainColumn>
    </Wiki>
  );
}

function WindowsTaskbar() {
  return (
    <Taskbar>
      <Slot><svg width="16" height="16" fill="#fff"><path d="M0 2.300 7 1.200v6.300H0zM8 1l8-1v7.500H8zM0 8.500h7v6.300l-7-1zM8 8.500h8V16l-8-1z" /></svg></Slot>
      <SearchField>
        <svg width="17" height="17" fill="none" stroke="#222" strokeWidth="1.400"><circle cx="10.500" cy="6.300" r="5.400" /><path d="m6.700 10.200-6 6" /></svg>
        <span><Fit w={128}>Type here to search</Fit></span>
        <PetsArt />
      </SearchField>
      <Slot><svg width="16" height="16"><circle cx="8" cy="8" r="6.700" fill="none" stroke="#fff" strokeWidth="2" /></svg></Slot>
      <Slot $gap={3}><svg width="16" height="16" fill="none" stroke="#fff" strokeWidth="1.200"><path d="M.6 1v2.500h10V1M.6 15v-2.500h10V15M.6 5.500h10v5H.6zM14.500 0v3.500M14.500 8v8" /><path d="M13.500 4.500h2v2h-2z" fill="#fff" /></svg></Slot>
      <Slot $gap={1}><EdgeIcon /></Slot>
      <Slot $gap={1} $open><ExplorerIcon /></Slot>
      <Slot $gap={1}><StoreIcon /></Slot>
      <Slot $gap={1} $open $active><ChromeMark size={24} color /></Slot>
      <Slot $gap={1}><MailIcon /></Slot>
      <Slot $gap={1} $open><CodeIcon /></Slot>
      <Slot $gap={1} $open><NotepadIcon /></Slot>
      <Slot $gap={1} $open>
        <svg width="24" height="24">
          <path d="M7 .5h10q6 1 6.500 7v6q-.5 6-7 7h-4L8 24v-4Q1 18.500.5 13V8Q1 1.500 7 .5z" fill="#fff" />
          <path d="M7.500 2h9Q21.500 3 22 8v5q-.5 5-6 6h-4.500L9 21.500V19q-6.500-1.500-7-6V8Q2.500 3 7.500 2z" fill="#7360f2" />
          <path d="M8 6c-2 1-2 2-1 4 1.500 3 3.500 5 6 6 1.500.5 2.500-1 2.500-2l-2-1.500-1.500 1Q9.500 12 9 10l1-1.500z" fill="#fff" />
          <path d="M12 5.500q5 .5 5 5.500M12.500 8q2 .5 2 2.500" fill="none" stroke="#fff" />
        </svg>
        <Count>7</Count>
      </Slot>
      <Slot $open><svg width="22" height="22"><circle cx="11" cy="11" r="11" fill="#7c2fa8" /><FaGithub x={3} y={3} size={16} color="#fff" /></svg></Slot>
      <Tray>
        <Sun />
        <Weather><Fit w={27}>88°F</Fit><Fit w={38}>Sunny</Fit></Weather>
        <TrayIcon $w={22}><svg width="12" height="7"><path d="m.5 6 5.500-5 5.500 5" fill="none" stroke="#fff" strokeWidth="1.300" /></svg></TrayIcon>
        <TrayIcon $w={24}><svg width="16" height="12"><path d="M5.500 3.500h9v7h-9z" fill="none" stroke="#fff" /><path d="M7 5h6v4H7zM15 5.500h1v3h-1zM0 2h5v3q0 2-2.500 2T0 5z" fill="#fff" /><path d="M1.500 0v2M3.500 0v2M2.500 6v4.500H5" stroke="#fff" fill="none" /></svg></TrayIcon>
        <TrayIcon $w={23}><svg width="17" height="14" fill="none" stroke="#fff"><path d="M.5 4.500h2l3-3v11l-3-3h-2zM7.500 4.800q1.500 2.200 0 4.400M9.800 3q3 4 0 8" /><path d="M12 1.500q4.500 5.500 0 11" opacity=".8" /><path d="M14 .5q4.500 6.500 0 13" opacity=".4" /></svg></TrayIcon>
        <Clock><Fit w={43}>4:20 PM</Fit><Fit w={58}>11/13/2022</Fit></Clock>
        <svg width="17" height="16"><path d="M.6.600h15.500v11.500h-5L8.300 15l-2.800-2.900H.6z" fill="none" stroke="#fff" strokeWidth="1.200" /></svg>
        <ShowDesktop />
      </Tray>
    </Taskbar>
  );
}

export default function App() {
  return (
    <Screen>
      <GlobalStyle />
      <BrowserFrame />
      <Viewport>
        <Page><DonationBanner /><WikiPage /></Page>
        <ScrollTrack><ArrowUp /><ScrollThumb /><ArrowDown /></ScrollTrack>
      </Viewport>
      <WindowsTaskbar />
    </Screen>
  );
}
